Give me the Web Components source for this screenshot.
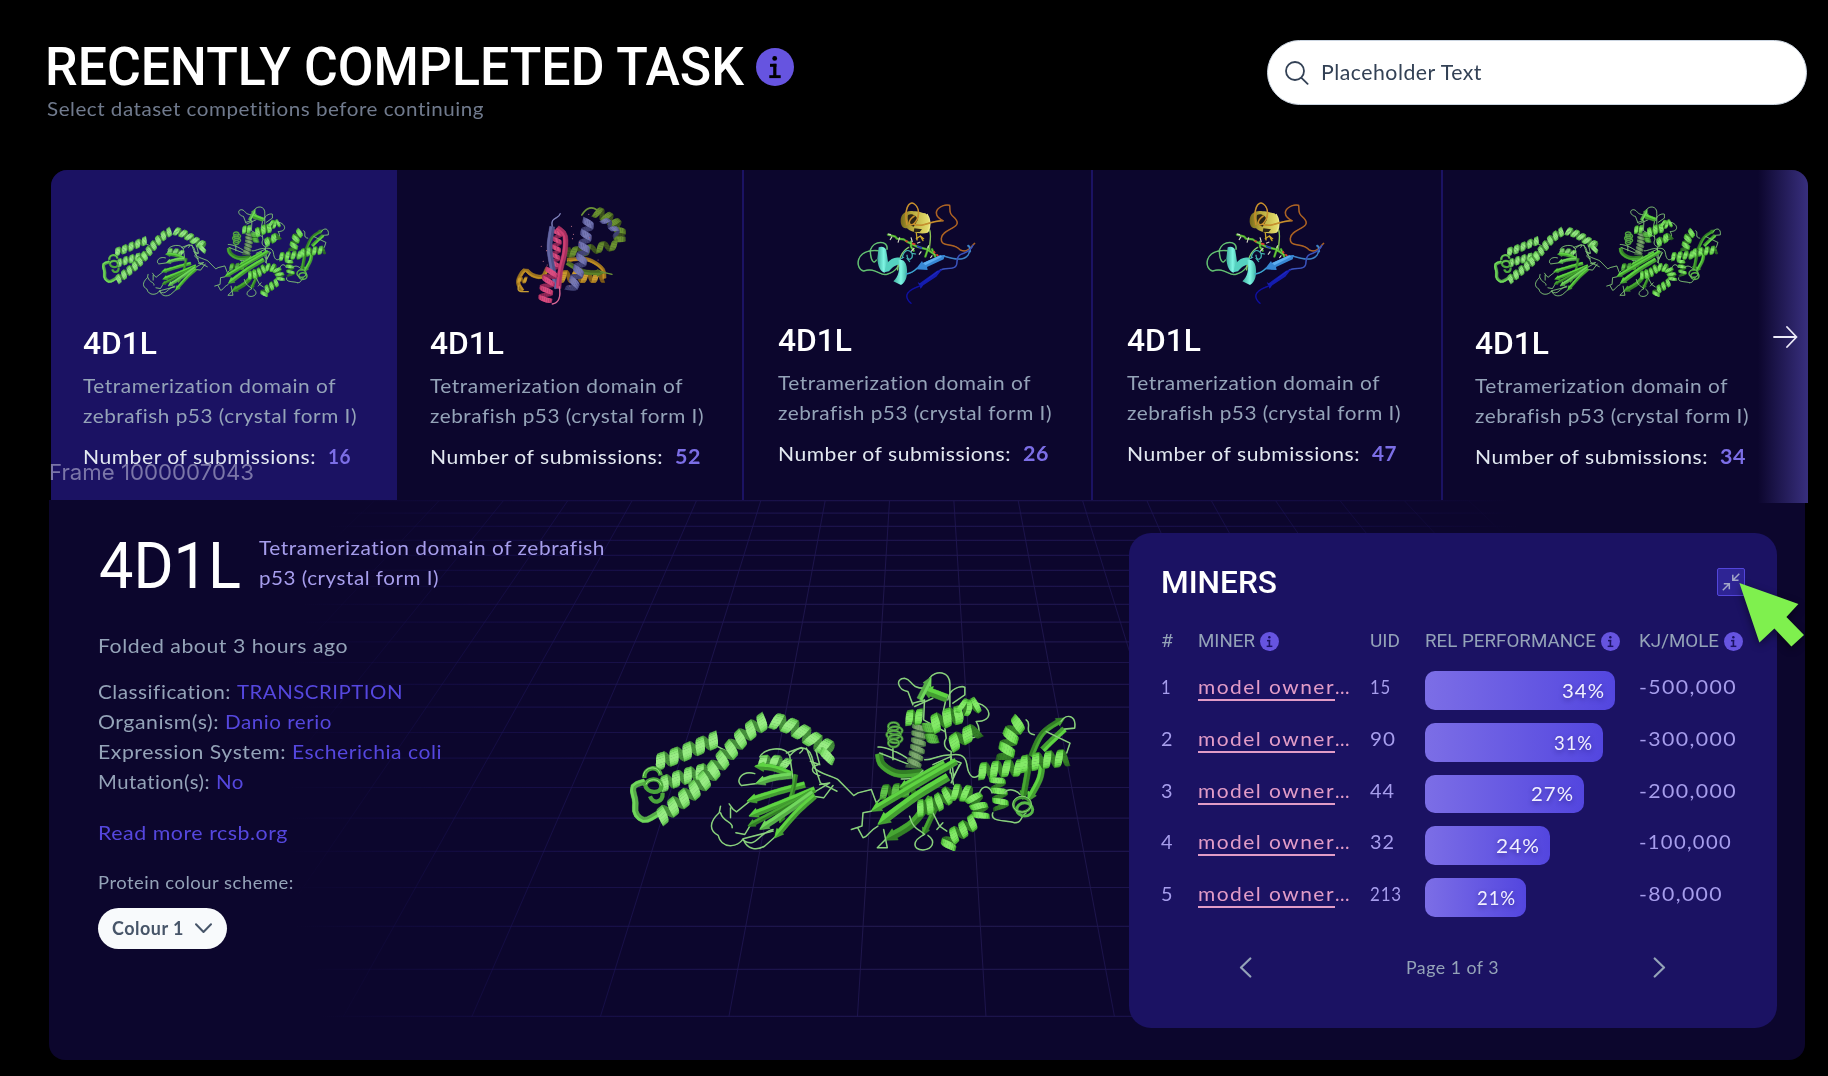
<!DOCTYPE html>
<html lang="en"><head><meta charset="utf-8"><title>Recently completed task</title>
<style>
html,body{margin:0;background:#000;width:1828px;height:1076px;overflow:hidden}
body{font-family:Lato,"Open Sans",sans-serif;font-size:20px;line-height:30px;color:#94a3b8;font-variant-ligatures:none}
</style></head><body>
<task-page></task-page>
<script>
/* ---------- molecule drawing ---------- */
const mix=(a,b,t)=>a.map((v,i)=>Math.round(v+(b[i]-v)*t));
const rgb=c=>`rgb(${c})`;
const PAL={
 green:[[34,92,28],[94,212,66],[150,246,122]],
 pale:[[52,116,46],[112,216,92],[172,248,152]],
 grey:[[52,84,58],[98,150,86],[140,180,125]],
 dark:[[26,80,22],[70,166,50],[110,212,86]],
 olive:[[50,66,26],[92,130,40],[115,155,54]],
 purple:[[52,52,100],[100,102,164],[128,130,190]],
 pink:[[120,30,75],[205,62,114],[226,84,136]],
 gold:[[112,80,20],[190,140,36],[215,168,56]]
};
function sampler(p){
 const cr=(a,b,c,d,t)=>.5*((2*b)+(-a+c)*t+(2*a-5*b+4*c-d)*t*t+(-a+3*b-3*c+d)*t*t*t);
 const pts=[];
 for(let i=0;i<p.length-1;i++){const a=p[i-1]||p[i],b=p[i],c=p[i+1],d=p[i+2]||c;
  for(let k=0;k<20;k++)pts.push([cr(a[0],b[0],c[0],d[0],k/20),cr(a[1],b[1],c[1],d[1],k/20)])}
 pts.push(p[p.length-1]);
 const L=[0];for(let i=1;i<pts.length;i++)L.push(L[i-1]+Math.hypot(pts[i][0]-pts[i-1][0],pts[i][1]-pts[i-1][1]));
 const T=L[L.length-1];
 return{T,at(u){const s=Math.max(0,Math.min(1,u))*T;let i=1;while(i<L.length-1&&L[i]<s)i++;
  const k=(s-L[i-1])/(L[i]-L[i-1]||1),a=pts[i-1],b=pts[i],l=Math.hypot(b[0]-a[0],b[1]-a[1])||1;
  return[a[0]+(b[0]-a[0])*k,a[1]+(b[1]-a[1])*k,(b[0]-a[0])/l,(b[1]-a[1])/l]}}
}
function helix(p,amp,turns,pal='green',fill=.5){
 const S=sampler(p),c=PAL[pal],w=S.T/turns*fill/2;let back='',front='';
 const N=10,pt=(th,o)=>{const[x,y,tx,ty]=S.at(th/(2*Math.PI*turns)),k=amp*Math.cos(th),b=w*(.66+.32*Math.abs(Math.sin(th)));
  return[x-ty*k+tx*o*b,y+tx*k+ty*o*b].map(v=>v.toFixed(1)).join(' ')};
 for(let h=0;h<turns*2;h++){
  const isF=h%2==0;
  for(let i=0;i<N;i++){const a=(h+i/N)*Math.PI,b=(h+(i+1.15)/N)*Math.PI,t=Math.sin((i+.5)/N*Math.PI);
   const col=isF?(t<.6?mix(c[0],c[1],.35+t):mix(c[1],c[2],(t-.6)*1.7)):mix(c[0],c[1],.3*t);
   const q=isF?1:.8,d=`<path d="M${pt(a,-q)}L${pt(b,-q)}L${pt(b,q)}L${pt(a,q)}Z" fill="${rgb(col)}"/>`;
   if(isF)front+=d;else back+=d}
 }
 return back+front;
}
function strand(p,w,pal='green',head=1){
 const S=sampler(p),c=PAL[pal],l=[],r=[],m=[];const N=16,hs=head?1-Math.min(.35,w*1.5/S.T):1;
 const us=[];for(let i=0;i<=N;i++)us.push([i/N*hs,w/2]);
 if(head){us.push([hs,w*.8]);us.push([1,1])}
 for(const[u,k]of us){const[x,y,tx,ty]=S.at(u);l.push([x-ty*k,y+tx*k]);r.unshift([x+ty*k,y-tx*k]);m.unshift([x,y])}
 const f=a=>a.map(q=>q.map(v=>v.toFixed(1)).join(' ')).join('L');
 return`<path d="M${f(l)}L${f(r)}Z" fill="${rgb(mix(c[0],c[1],.55))}" stroke="${rgb(mix(c[0],c[1],.8))}" stroke-width="1.5"/><path d="M${f(l)}L${f(m)}Z" fill="${rgb(c[1])}"/>`;
}
const coil=(d,col='#76bd6c',w=4.6,in_='#a2e294')=>`<path d="${d}" fill="none" stroke="${col}" stroke-width="${w}" stroke-linejoin="round" stroke-linecap="round"/><path d="${d}" fill="none" stroke="${in_}" stroke-width="${w*.35}" stroke-linejoin="round"/>`;
const rings=(x,y0,y1,n,rx,ry)=>{let s='';for(let i=0;i<n;i++){const y=y0+(y1-y0)*i/(n-1);s+=`<ellipse cx="${x+(i%2?3:-2)}" cy="${y}" rx="${rx-(i==0||i==n-1?5:0)}" ry="${ry}" fill="none" stroke="#3f8f33" stroke-width="8"/><ellipse cx="${x+(i%2?3:-2)}" cy="${y}" rx="${rx-(i==0||i==n-1?5:0)}" ry="${ry}" fill="none" stroke="#7ccc68" stroke-width="2.2"/>`}return s};
const greenMol=()=>[
 coil('M352 290L378 303M180 352C160 350 172 330 185 335M100 412L135 395M98 425L103 450'),
 strand([[135,396],[100,412],[106,455],[108,492],[135,512],[175,492]],17,'pale',0),
 helix([[172,338],[230,318],[290,293],[350,268]],25,4.5,'pale',.7),
 helix([[185,405],[240,385],[300,368],[345,360]],24,4.5,'pale',.7),
 '<path d="M133 385C132 350 178 345 182 378M135 410C138 385 182 380 184 410C184 435 140 432 135 405M150 440C160 465 190 460 188 430" fill="none" stroke="#4aa63c" stroke-width="13"/><path d="M130 380C132 350 174 346 180 372M138 405C142 386 180 384 184 408" fill="none" stroke="#9aec80" stroke-width="3"/>',
 helix([[180,505],[225,468],[285,420],[330,375],[385,310],[435,255],[495,212]],26,10.5,'pale',.7),
 helix([[520,212],[565,226],[610,250],[655,280],[688,300],[678,328]],26,5.5,'pale',.7),
 coil('M465 372C425 360 405 395 425 408L470 402M480 322C490 295 560 285 570 320L582 400M570 318C600 285 630 285 640 335L662 400L712 425M620 295L640 350C650 370 700 380 715 390L762 438L775 430L815 420L830 460L852 438M560 310L600 295C610 290 615 300 600 310M632 335L660 345L648 300M655 345C632 350 632 370 660 378'),
 coil('M450 455L410 487L400 480L388 463M392 475V505M362 470L358 490C325 520 330 545 355 558C365 600 415 595 430 568L520 545M362 490C370 520 400 515 397 535M408 550L435 555L450 530M430 568C440 600 470 605 495 590L540 550M430 572C470 600 475 550 520 540M640 430L690 400L660 405M640 440L672 445L700 408'),
 helix([[480,335],[530,335],[565,345]],19,2.5,'pale',.7),
 strand([[575,375],[520,355],[465,350]],18),strand([[575,378],[520,385],[468,402]],18,'pale'),
 strand([[615,405],[540,425],[442,455]],18),strand([[588,375],[575,440],[540,520]],12,'dark'),
 strand([[645,420],[560,455],[448,500]],18),strand([[635,428],[540,480],[445,530]],14,'dark'),
 strand([[640,430],[570,480],[480,540]],18,'pale'),strand([[645,440],[590,490],[525,565]],17),
 coil('M940 165L925 125C895 120 885 85 915 85C940 90 930 115 975 115M990 85C1005 60 1055 60 1051 110V200M1045 150C1050 110 1090 108 1096 112V135L1060 160M1135 160C1175 170 1185 215 1130 215C1145 240 1140 262 1115 265M940 160L975 150L972 210L1035 245M1000 145L945 170M1040 145L1030 190L1040 265C1030 280 1035 300 1055 305L1052 370'),
 strand([[838,312],[848,345],[895,372],[968,368]],22,'dark',0),coil('M835 292C850 290 900 305 935 335M880 295V330M840 310L930 345M905 388C950 390 960 375 970 362'),
 rings(884,230,280,5,21,12),
 helix([[960,228],[955,290],[940,355]],23,6,'grey',.75),
 helix([[922,205],[965,200]],24,1.5,'green',.8),helix([[985,225],[1000,275]],18,1.5,'dark',.9),
 strand([[1042,145],[970,118]],24),strand([[960,148],[994,82]],17,'pale'),
 helix([[1000,225],[1040,205],[1078,195]],28,2.2,'green',.7),
 helix([[1082,165],[1110,175],[1130,165]],25,2.2,'green',.7),
 helix([[1055,285],[1090,262],[1135,240]],25,2,'green',.7),
 coil('M975 330C1000 332 1010 315 1060 315C1110 310 1098 350 1108 368C1118 390 1130 385 1145 372M1000 345L1055 320L1062 380L1085 340L1060 330M1055 400L1080 345'),
 helix([[845,428],[890,425],[945,415]],23,3,'dark',.65),
 strand([[1035,340],[900,415]],16),strand([[1070,335],[950,405],[815,485]],20,'green'),
 strand([[1045,382],[950,440],[835,525]],24,'green'),strand([[995,445],[940,520],[855,572]],24,'dark'),strand([[1008,475],[970,558]],15,'dark'),
 coil('M815 485L790 490L787 530L755 540M775 537L790 565C810 560 800 550 835 530M858 570L833 595H863L852 540M930 500C940 540 960 540 975 555C935 575 940 600 970 602C1000 600 1010 575 985 558M1000 490L1020 530L1042 545M1012 540L1030 520M1055 370L1062 405'),
 helix([[955,478],[1010,462],[1060,425]],26,4,'green',.68),
 helix([[1060,428],[1110,435],[1138,470],[1145,505]],26,4.5,'green',.68),
 helix([[1125,515],[1085,545],[1055,565],[1045,595]],24,3.5,'green',.68),
 helix([[1262,215],[1235,255],[1215,330]],26,3,'green',.7),
 strand([[1288,350],[1270,450]],17,'dark'),strand([[1328,345],[1320,390],[1285,455]],18),
 strand([[1295,320],[1330,250],[1395,205]],16,'dark'),strand([[1330,300],[1355,275],[1395,238]],18,'green',0),
 helix([[1140,366],[1200,358],[1265,354]],26,3.5,'green',.66),
 helix([[1265,345],[1330,332],[1405,324]],26,4,'green',.66),
 helix([[1192,385],[1200,430],[1205,480]],24,3,'green',.6),
 coil('M1280 210C1300 220 1270 250 1305 255M1385 215C1400 190 1432 195 1426 235L1395 238M1340 245L1412 280L1402 310M1245 520C1220 510 1170 520 1180 490M1280 490C1262 500 1270 520 1245 520M1140 430C1150 405 1170 408 1178 430M1215 430C1225 415 1250 420 1262 435'),
 '<ellipse cx="1268" cy="466" rx="26" ry="22" fill="none" stroke="#459a38" stroke-width="9"/><ellipse cx="1276" cy="480" rx="24" ry="20" fill="none" stroke="#58b848" stroke-width="9"/><ellipse cx="1268" cy="464" rx="28" ry="24" fill="none" stroke="#96e082" stroke-width="2.5"/>',
].join('');
const dimerMol=()=>[
 coil('M544 165C560 140 575 140 590 150','#5f8632',5,'#7ea044'),
 helix([[585,155],[622,173],[655,203],[658,238]],18,4.2,'olive',.62),helix([[650,255],[600,262],[555,272],[505,278]],16,3.6,'olive',.5),
 helix([[608,178],[640,205],[650,230]],12,2,'purple',.5),
 strand([[365,392],[352,365],[372,330],[395,345],[425,350],[440,325]],11,'gold',0),coil('M355 375C345 400 365 394 383 395','#b8902c',4,'#d8ac48'),helix([[352,360],[378,360]],10,1.5,'gold',.6),
 helix([[480,350],[540,350],[610,350]],19,4,'gold',.55),strand([[500,300],[560,298],[605,325],[612,355]],10,'gold',0),
 strand([[500,308],[550,335],[610,338]],13,'olive'),coil('M600 335L635 343','#5f8632',4,'#7ea044'),
 helix([[565,180],[555,235],[545,290],[530,345],[510,392]],18,6,'purple',.6),
 coil('M455 200C448 170 475 178 479 161','#7476b0',4,'#9092cc'),
 helix([[472,212],[468,260],[462,330]],14,5,'pink',.6),
 strand([[455,200],[447,260],[455,320],[470,385]],15,'purple',0),
 strand([[470,203],[493,225],[493,275],[480,330],[474,385]],14,'pink',0),
 helix([[455,330],[440,375],[434,420]],21,3.3,'pink',.58),coil('M476 380C482 410 475 430 455 432','#c85c8c',4,'#e878a0'),
 ...[[422,259],[438,272],[428,304],[513,199],[519,223],[516,236],[537,247],[565,163],[593,300],[568,233],[440,315],[508,378]].map(q=>`<circle cx="${q[0]}" cy="${q[1]}" r="1.8" fill="#b06a80"/>`)
].join('');
const rainbowMol=()=>[
 '<defs><linearGradient id="t1" x1="0" x2="1"><stop offset="0" stop-color="#3fae9e"/><stop offset=".55" stop-color="#7ff6e4"/><stop offset="1" stop-color="#3fb0a4"/></linearGradient><linearGradient id="y1" x1="0" x2="1"><stop offset="0" stop-color="#75681a"/><stop offset=".35" stop-color="#b5a638"/><stop offset="1" stop-color="#e8e270"/></linearGradient></defs>',
 coil('M568 210C575 235 565 255 568 272','#7ab848',4,'#a4d868'),
 '<path d="M481 185C480 160 498 150 520 154C535 152 545 160 555 160C572 172 572 205 562 218C540 225 510 215 500 205C488 205 482 198 481 185Z" fill="url(#y1)"/><path d="M503 165C515 158 530 168 532 180L520 200C505 195 500 180 503 165ZM522 205L545 208L538 216H520Z" fill="#2b2418"/><path d="M560 162Q577 188 562 216" stroke="#efe98a" stroke-width="4" fill="none"/>',
 coil('M500 195C490 150 505 120 522 132C540 145 538 175 520 192C505 200 500 182 522 168M520 192C550 205 570 180 608 182','#b88024',4.5,'#dca640'),
 coil('M608 182C565 160 600 130 628 136C630 155 625 160 645 176C670 205 605 205 603 235C600 265 640 245 660 270C685 280 690 260 703 250','#9c561e',4.5,'#c07430'),
 coil('M690 275C690 250 675 255 688 262C690 300 660 305 610 288','#2f70b4',4.5,'#5898d4'),
 coil('M698 256C685 290 650 270 650 305C650 335 620 320 600 330','#2c42ac',4.5,'#506ac8'),
 coil('M440 268C445 240 400 240 390 270C390 300 400 315 408 300M415 272C340 265 345 330 370 333C405 320 420 350 440 343C470 335 480 310 475 305','#50aa62',4.5,'#7cd488'),
 coil('M472 330C475 290 490 270 505 262','#78c060',4,'#a0dc88'),
 coil('M443 224L465 230L470 236L490 238L500 245L530 260L560 268L585 285M512 245V260L520 272M565 260L555 290M575 268L585 290','#45a028',7,'#7cd850'),
 '<path d="M443 222L452 224M449 240L455 230M473 248L478 232M512 232L516 246M512 275L522 264M536 284L543 274M565 256L562 265M570 294L576 286M530 250L540 246" stroke="#d4d6c4" stroke-width="3.5"/><path d="M495 243L502 245M515 250L525 253M580 274L584 280M588 283L594 288" stroke="#df3d30" stroke-width="5"/><path d="M530 258L545 265" stroke="#2837c8" stroke-width="5"/>',
 coil('M528 218L530 240M528 236L540 228L550 236M548 242L540 228','#b8921e',4,'#dcbc40'),
 coil('M485 295C490 270 505 265 515 280C520 300 500 305 500 285M515 280L526 282M500 295L508 305M475 300L490 292','#30a0a0',3.5,'#68d0c8'),
 '<path d="M415 262C425 258 436 262 438 272L446 325L432 338C420 335 412 318 411 295Z" fill="url(#t1)"/><path d="M438 312C452 295 465 290 480 294L482 312C465 315 455 322 446 334L432 337Z" fill="#55d2c0"/><path d="M474 300C488 296 496 305 499 320C503 345 498 365 482 375L459 364C474 350 480 330 474 300Z" fill="url(#t1)"/>',
 coil('M498 342C515 340 525 330 530 325','#3098c4',4.5,'#54b8e0'),
 '<path d="M526 328L545 303L548 309L600 286L614 285L610 298L560 321L562 330Z" fill="#3787d4"/><path d="M548 309L600 286L605 290L555 316Z" fill="#5caef0"/>',
 '<path d="M532 366L541 386L549 376L588 350L606 328L590 332L538 370Z" fill="#141cb0"/><path d="M545 370L590 335L600 330L570 352Z" fill="#2f38cc"/>',
 coil('M538 378C505 390 485 405 512 430','#0a0a8c',4.5,'#1c1cae'),
].join('');
const MOL={green:['90 63 1340 542',greenMol],dimer:['346 138 337 297',dimerMol],rainbow:['350 126 357 306',rainbowMol]};

const el=(name,fn,after)=>customElements.define(name,class extends HTMLElement{
 connectedCallback(){if(this.shadowRoot)return;this.attachShadow({mode:'open'}).innerHTML=fn(this);after&&after(this)}});

el('mol-view',e=>{const m=MOL[e.getAttribute('kind')];return`<style>:host{display:block;flex:none}svg{display:block;width:100%;height:100%}</style><svg viewBox="${m[0]}" preserveAspectRatio="none">${m[1]()}</svg>`});
el('info-dot',e=>`<style>:host{display:block;flex:none;width:var(--d,19px);height:var(--d,19px)}svg{display:block}</style>
<svg width="100%" height="100%" viewBox="0 0 38 38"><circle cx="19" cy="19" r="19" fill="#6654e0"/><g fill="var(--ink,#1b1263)"><circle cx="18.7" cy="10.4" r="2.4"/><rect x="14" y="15.8" width="6.4" height="3"/><rect x="17.2" y="15.8" width="3.2" height="13"/><rect x="13.3" y="27.2" width="11.4" height="2.9"/></g></svg>`);

el('search-field',()=>`<style>:host{display:flex;align-items:center;box-sizing:border-box;width:540px;height:65px;border:1px solid #cbd5e1;border-radius:33px;background:#fff;padding-left:17px;gap:12px;color:#334155;font-size:21px}
svg{flex:none}fit-text{margin-top:-2px}</style><svg width="24" height="24" viewBox="0 0 24 24" fill="none" stroke="#334155" stroke-width="1.8" stroke-linecap="round"><circle cx="10" cy="10" r="9"/><path d="M16.5 16.8L22.6 22.8"/></svg><fit-text w="161">Placeholder Text</fit-text>`);

el('page-header',()=>`<style>:host{display:flex;justify-content:space-between;align-items:flex-start;padding:0 21px 0 45px}
.l{display:flex;flex-direction:column;padding-top:41px}.t{display:flex;gap:12px}h1{margin:0;font:500 54px/52px Roboto,sans-serif;color:#fff}info-dot{--d:38px;--ink:#000;margin-top:7px}.s{color:#707a8d;margin-left:2px}search-field{margin-top:40px}</style>
<div class="l"><div class="t"><h1><fit-text w="699" ls="0">RECENTLY COMPLETED TASK</fit-text></h1><info-dot></info-dot></div><div class="s"><fit-text w="437">Select dataset competitions before continuing</fit-text></div></div><search-field></search-field>`);

el('protein-card',e=>`<style>:host{display:flex;flex-direction:column;box-sizing:border-box;height:330px;border-right:2px solid #1b1263;flex:none}
:host([active]){background:#1b1263}:host([last]){border:0}
.p{height:var(--ph,158px);box-sizing:border-box}h3{margin:0;font:500 31px/32px Roboto,sans-serif;color:#fff}
.d{margin-top:10px}.n{margin-top:11px;display:flex;gap:12px;color:#e2e8f0}.n b{color:#7c6ee6;font-weight:700}</style>
<div class="p"><slot></slot></div><h3><fit-text w="74" ls="0">4D1L</fit-text></h3>
<div class="d"><fit-text w="253">Tetramerization domain of</fit-text><br><fit-text w="274">zebrafish p53 (crystal form I)</fit-text></div>
<div class="n"><fit-text w="233">Number of submissions:</fit-text><b><fit-text w="${e.getAttribute('nw')}">${e.getAttribute('count')}</fit-text></b></div>`);

el('card-strip',()=>`<style>:host{display:flex;position:relative;width:1757px;height:330px;margin-left:51px;background:#0c062d;border-radius:16px 16px 0 0}
protein-card{padding-left:33px}protein-card[active]{border-radius:16px 0 0 0;padding-left:32px}.p3{--ph:155px}
mol-view{display:inline-block;vertical-align:top}
.g{width:227px;height:91px;margin:36px 0 0 19px}.m{width:112px;height:99px;margin:36px 0 0 86px}.r{width:119px;height:102px;margin:32px 0 0 79px}
.next{position:absolute;right:0;top:0;width:50px;height:333px;border-radius:0 16px 0 0;background:linear-gradient(90deg,rgba(56,47,126,0),#382f7e);display:flex;align-items:center;justify-content:center}.next svg{margin-left:3px}
.f{position:absolute;left:-2px;top:288px;font:400 22px/28px Inter,sans-serif;color:#7b76a8}
</style>
<protein-card active style="width:346px" count="16" nw="23"><mol-view class="g" kind="green"></mol-view></protein-card>
<protein-card style="width:347px" count="52" nw="26"><mol-view class="m" kind="dimer"></mol-view></protein-card>
<protein-card class="p3" style="width:349px;padding-left:34px" count="26" nw="26"><mol-view class="r" kind="rainbow"></mol-view></protein-card>
<protein-card class="p3" style="width:350px;padding-left:34px" count="47" nw="25"><mol-view class="r" kind="rainbow"></mol-view></protein-card>
<protein-card last style="width:365px;padding-left:32px" count="34" nw="26"><mol-view class="g" kind="green"></mol-view></protein-card>
<div class="next"><svg width="26" height="24" viewBox="0 0 26 24" fill="none" stroke="#eceaf8" stroke-width="1.8" stroke-linecap="round" stroke-linejoin="round"><path d="M2 12H24.5M15 2L24.5 12L15 22"/></svg></div>
<div class="f"><fit-text w="205" ls="0">Frame 1000007043</fit-text></div>`);

el('floor-grid',()=>{
 const ys=[30,65,102,141,183,225,270,320,370,425,483,544,608,679,751,833,919,1012,1113,1222,1342,1474].map(v=>v/2.8-10);
 let h='',v='';for(const y of ys)h+=`M0 ${y.toFixed(1)}H1756`;
 for(let k=-9;k<9;k++)v+=`M${872.7+64.4*(k+.5)} 1L${872.7+128.5*(k+.5)} 516.4`;
 return`<style>:host{display:block}svg{display:block}</style><svg width="1756" height="560"><defs><radialGradient id="f" gradientUnits="userSpaceOnUse" cx="873" cy="280" r="640" gradientTransform="translate(0 -30) scale(1 1.1)"><stop offset="0" stop-color="#251d4a"/><stop offset=".35" stop-color="#1f1651" stop-opacity=".85"/><stop offset=".65" stop-color="#1c1358" stop-opacity=".55"/><stop offset="1" stop-color="#1b1263" stop-opacity="0"/></radialGradient></defs><path d="${h}" fill="none" stroke="url(#f)" stroke-width="1.2"/><path d="${v}" fill="none" stroke="url(#f)" stroke-width="1"/></svg>`});

const facts=[['Classification:',133,'TRANSCRIPTION',166],['Organism(s):',121,'Danio rerio',107],['Expression System:',188,'Escherichia coli',150],['Mutation(s):',112,'No',28]];
el('protein-info',()=>`<style>:host{display:block;width:532px}.h{display:flex;gap:18px}h2{margin:3px 0 0 1px;font:400 64px/64px Roboto,sans-serif;color:#fff}.d{color:#a69dec}
.f{margin-top:31px}.c{margin-top:16px}.c div{display:flex;gap:6px}.v,.r{color:#5547de}.r{margin-top:21px}.s{margin-top:22px;font-size:18px;line-height:27px}
.b{display:flex;align-items:center;gap:11px;box-sizing:border-box;width:129px;height:41px;margin-top:12px;border-radius:20.5px;background:#f8fafc;color:#475569;padding-left:14px;font-weight:700;font-size:18px}.b fit-text{margin-top:-2px}</style>
<div class="h"><h2><fit-text w="142" ls="0">4D1L</fit-text></h2><div class="d"><fit-text w="346">Tetramerization domain of zebrafish</fit-text><br><fit-text w="180">p53 (crystal form I)</fit-text></div></div>
<div class="f"><fit-text w="250">Folded about 3 hours ago</fit-text></div>
<div class="c">${facts.map(f=>`<div><fit-text w="${f[1]}">${f[0]}</fit-text><fit-text class="v" w="${f[3]}">${f[2]}</fit-text></div>`).join('')}</div>
<div class="r"><fit-text w="190">Read more rcsb.org</fit-text></div>
<div class="s"><fit-text w="196">Protein colour scheme:</fit-text></div>
<div class="b"><fit-text w="72">Colour 1</fit-text><svg width="17" height="11" viewBox="0 0 17 11" fill="none" stroke="#475569" stroke-width="2" stroke-linecap="round" stroke-linejoin="round"><path d="M1 1.3L8.5 9L16 1.3"/></svg></div>`);

const rows=[[1,10,15,21,190,'34%',43,'-500,000',98],[2,12,90,26,178,'31%',39,'-300,000',98],[3,12,44,25,159,'27%',43,'-200,000',98],[4,12,32,25,125,'24%',44,'-100,000',93],[5,12,213,32,101,'21%',39,'-80,000',84]];
el('miners-panel',()=>`<style>:host{display:block;position:relative;box-sizing:border-box;width:648px;height:494.5px;border-radius:22px;background:#1b1263;padding:33px 32px 0 32px}
.t{display:flex;justify-content:space-between;align-items:center}h2{margin:0;font:500 32px/32px Roboto,sans-serif;color:#fff}
.x{box-sizing:border-box;width:28px;height:28px;border:1px solid #5346db;background:#2e2494;border-radius:2px;display:flex;align-items:center;justify-content:center}
.g{display:grid;grid-template-columns:37px 172px 55px 214px 104px}
.hd{margin-top:31px;font:400 19px/24px Roboto,sans-serif}.hd>div{display:flex;gap:6px;align-items:center}.hd info-dot{margin-left:-1px}
.rows{margin-top:18.3px;display:flex;flex-direction:column;gap:13px;color:#a69dec;line-height:31px}.row{height:38.67px}
.m{color:#e29cc7;display:flex}
.bar{height:38.67px;box-sizing:border-box;border-radius:10px;background:linear-gradient(90deg,#7c6ee6,#5346df);display:flex;justify-content:flex-end;align-items:center;padding-right:10px;color:#f1f0ff;text-shadow:0 2px 5px rgba(20,10,80,.45)}
.pg{margin:37px 79px 0 78px;display:flex;justify-content:space-between;align-items:center;font-size:18px;line-height:27px}
.cur{position:absolute;left:605px;top:44px;filter:drop-shadow(0 3px 4px rgba(0,0,0,.45));overflow:visible}</style>
<div class="t"><h2><fit-text w="116" ls="0">MINERS</fit-text></h2><div class="x"><svg width="18" height="18" viewBox="0 0 18 18" fill="none" stroke="#a3a6c8" stroke-width="1.5"><path d="M17.3 .8L10.8 7.3M10.8 1.8V7.3H16.5M.8 17.2L7.3 10.7M1.8 10.7H7.3V16.3"/></svg></div></div>
<div class="g hd"><div><fit-text w="12" ls="0">#</fit-text></div><div><fit-text w="57" ls="0">MINER</fit-text><info-dot></info-dot></div><div><fit-text w="30" ls="0">UID</fit-text></div><div><fit-text w="171" ls="0">REL PERFORMANCE</fit-text><info-dot></info-dot></div><div><fit-text w="80" ls="0">KJ/MOLE</fit-text><info-dot></info-dot></div></div>
<div class="rows">${rows.map(r=>`<div class="g row"><fit-text w="${r[1]}">${r[0]}</fit-text><div class="m"><fit-text u ls="1.4" w="137">model owner</fit-text><fit-text w="15">...</fit-text></div><fit-text ls="1" w="${r[3]}">${r[2]}</fit-text><div><div class="bar" style="width:${r[4]}px"><fit-text ls="1" w="${r[6]}">${r[5]}</fit-text></div></div><fit-text ls="1.3" w="${r[8]}">${r[7]}</fit-text></div>`).join('')}</div>
<div class="pg"><svg width="13" height="21" viewBox="0 0 13 21" fill="none" stroke="#94a3b8" stroke-width="2.2" stroke-linecap="round" stroke-linejoin="round"><path d="M11.3 1.5L2 10.5L11.3 19.5"/></svg><fit-text w="93">Page 1 of 3</fit-text><svg width="13" height="21" viewBox="0 0 13 21" fill="none" stroke="#94a3b8" stroke-width="2.2" stroke-linecap="round" stroke-linejoin="round"><path d="M1.7 1.5L11 10.5L1.7 19.5"/></svg></div>
<svg class="cur" width="75" height="75"><path d="M5.4 6L64.4 27L52.4 40L70 58L57.4 69.5L40.4 51.5L25.4 65.5Z" fill="#7ff04e"/></svg>`);

el('detail-panel',()=>`<style>:host{display:grid;width:1756px;height:560px;margin-left:49px;background:#0c062d;border-radius:0 0 16px 16px}
floor-grid,.c{grid-area:1/1}.c{display:flex;align-items:flex-start;padding-left:49px;z-index:1}
protein-info{margin-top:32px}mol-view{width:446px;height:180px;margin:171px 53px 0 0}miners-panel{margin-top:33px}</style>
<floor-grid></floor-grid><div class="c"><protein-info></protein-info><mol-view kind="green"></mol-view><miners-panel></miners-panel></div>`);

el('task-page',()=>`<style>:host{display:flex;flex-direction:column;height:1076px}page-header{height:170px;flex:none}card-strip,detail-panel{flex:none}card-strip{z-index:1}</style><page-header></page-header><card-strip></card-strip><detail-panel></detail-panel>`);

/* text run set to a fixed measure */
el('fit-text',e=>`<style>:host{display:inline-block;white-space:nowrap;vertical-align:top;flex:none}span{display:inline-block;transform-origin:0 50%;letter-spacing:${e.getAttribute('ls')||.5}px}:host([u]) span{text-decoration:underline 1.5px;text-underline-offset:5px;text-decoration-skip-ink:none}</style><span><slot></slot></span>`,
e=>{const s=e.shadowRoot.querySelector('span'),w=+e.getAttribute('w'),m=s.getBoundingClientRect().width;
 e.style.width=w+'px';if(m){s.style.transform=`scaleX(${w/m})`;s.style.marginRight=(w-m)+'px'}});
</script></body></html>
